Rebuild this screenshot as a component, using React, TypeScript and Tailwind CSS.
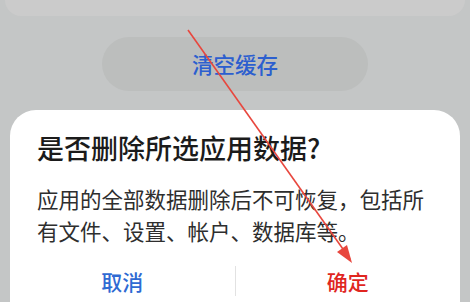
export default function App() {
  const font = { fontFamily: '"Noto Sans CJK SC", "Noto Sans", sans-serif' };

  return (
    <div
      className="relative w-[470px] h-[302px] overflow-hidden bg-[#c4c6c6] flex flex-col"
      style={font}
    >
      {/* top card peeking under the status area */}
      <div className="mx-[5px] h-[16px] rounded-b-[26px] bg-[#cbcbcb]" />

      <div className="mt-[21px] mx-auto w-[266px] h-[54px] rounded-full bg-[#bcbebd] flex items-center justify-center">
        <span className="text-[21.5px] font-medium text-[#2c5fcf] leading-none">清空缓存</span>
      </div>

      {/* dialog */}
      <div className="mt-[19px] mx-[10px] flex-1 rounded-t-[26px] bg-white flex flex-col">
        <div className="px-[27px] pt-[20px]">
          <h1 className="text-[27px] leading-[36px] font-medium text-[#1b1b1b]">是否删除所选应用数据?</h1>
          <p className="mt-[17px] text-[21.5px] leading-[32px] text-[#2e2e2e]">
            应用的全部数据删除后不可恢复，包括所有文件、设置、帐户、数据库等。
          </p>
        </div>
        <div className="mt-[14px] flex items-center h-[40px]">
          <button className="flex-1 text-[21px] font-medium text-[#2f6ad3] leading-none">取消</button>
          <div className="w-px h-[30px] bg-[#e2e2e2]" />
          <button className="flex-1 text-[21px] font-medium text-[#e0261f] leading-none">确定</button>
        </div>
      </div>

      {/* red annotation arrow */}
      <svg className="absolute inset-0 pointer-events-none" width="470" height="302" viewBox="0 0 470 302">
        <line x1="188" y1="30" x2="350" y2="259" stroke="#e8473e" strokeWidth="1.6" />
        <path d="M352 263 L337 252 L347 245 Z" fill="#e8473e" />
      </svg>
    </div>
  );
}
